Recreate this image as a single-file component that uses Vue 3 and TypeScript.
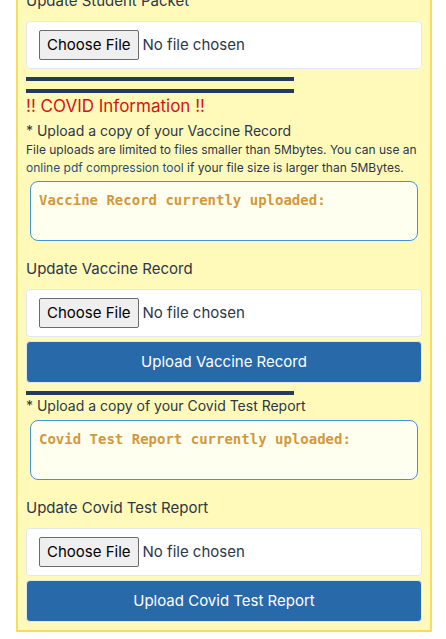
<script setup lang="ts">
interface Section {
  id: string
  name: string
  sizeNote: boolean
}

const sections: Section[] = [
  { id: 'vaccine', name: 'Vaccine Record', sizeNote: true },
  { id: 'covid-test', name: 'Covid Test Report', sizeNote: false },
]
</script>

<template>
  <main class="viewport">
    <div class="panel">
      <label class="label" for="student-packet">Update Student Packet</label>
      <input id="student-packet" class="file" type="file" />
      <hr class="rule" />
      <hr class="rule" />
      <h2 class="heading">!! COVID Information !!</h2>
      <form v-for="(section, index) in sections" :key="section.id" @submit.prevent>
        <hr v-if="index > 0" class="rule" />
        <p class="lead">* Upload a copy of your {{ section.name }}</p>
        <p v-if="section.sizeNote" class="note">
          File uploads are limited to files smaller than 5Mbytes. You can use an
          <a href="#">online pdf compression tool</a> if your file size is larger than 5MBytes.
        </p>
        <div class="current">{{ section.name }} currently uploaded:</div>
        <label class="label" :for="section.id">Update {{ section.name }}</label>
        <input :id="section.id" class="file" type="file" />
        <button class="submit" type="submit">Upload {{ section.name }}</button>
      </form>
    </div>
  </main>
</template>

<style>
body {
  background: #fff;
}
</style>

<style scoped>
.viewport {
  overflow: hidden;
  padding: 0 14px 7px 16px;
  font-family: Inter, "Liberation Sans", sans-serif;
  font-size: 15px;
  line-height: 24px;
  color: #2d3748;
}
.panel {
  margin-top: -21px;
  padding: 8px;
  border: 2px solid #f8dc60;
  background: #fffab9;
}
.label {
  display: block;
  margin-bottom: 8px;
}
.file {
  display: block;
  box-sizing: border-box;
  width: 100%;
  padding: 8px 12px;
  border: 1px solid #e2e8f0;
  border-radius: 4px;
  background: #fff;
  color: #2d3748;
  font: inherit;
}
.file::file-selector-button {
  box-sizing: border-box;
  height: 30px;
  margin: 0 4px 0 0;
  padding: 0 7px;
  border: 1px solid #6b6b6b;
  border-radius: 2px;
  background: #efefef;
  color: #000;
  font: inherit;
}
.rule {
  width: 268px;
  max-width: 100%;
  height: 4px;
  margin: 8px 0 0;
  border: 0;
  background: #233b5c;
}
.heading {
  margin: 0;
  font-size: 17px;
  line-height: 27px;
  font-weight: 400;
  color: #d31414;
}
.lead,
.note {
  margin: 0;
  font-size: 14px;
  line-height: 21px;
}
.note {
  font-size: 12px;
  line-height: 18px;
}
.note a {
  color: #2c4f7c;
  text-decoration: none;
}
.current {
  box-sizing: border-box;
  min-height: 60px;
  margin: 4px 4px 16px;
  padding: 8px;
  border: 1px solid #4393d8;
  border-radius: 8px;
  background: #fffff0;
  color: #d3983a;
  font-family: "DejaVu Sans Mono", monospace;
  font-size: 14px;
  line-height: 21px;
  font-weight: 700;
}
.submit {
  display: block;
  width: 100%;
  margin-top: 4px;
  padding: 8px;
  border: 1px solid #e2e8f0;
  border-radius: 4px;
  background: #2869aa;
  color: #fff;
  font: inherit;
}
</style>
